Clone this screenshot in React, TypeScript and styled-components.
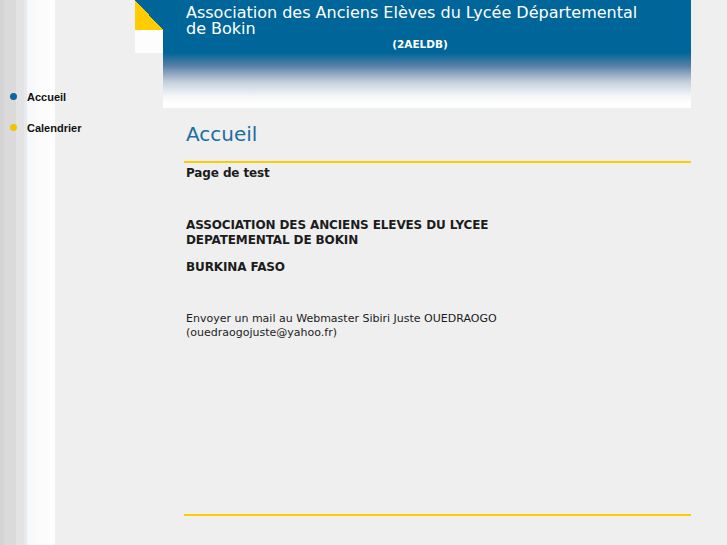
import type { FC } from 'react';
import styled, { createGlobalStyle } from 'styled-components';

const GlobalStyle = createGlobalStyle`
  html, body {
    margin: 0;
    padding: 0;
  }

  body {
    background-color: #efefef;
    background-image: linear-gradient(
      to right,
      #d3d3d3 0,
      #d3d3d3 4px,
      #dadada 4px,
      #dadada 16px,
      #e3e3e3 16px,
      #e3e3e3 24px,
      #e7eaed 24px,
      #e7eaed 27px,
      #f6f7f9 27px,
      #fcfcfd 40px,
      #fdfdfd 55px,
      #efefef 55px
    );
    background-repeat: repeat-y;
    font-family: 'DejaVu Sans', Verdana, sans-serif;
    min-height: 545px;
  }
`;

type NavItem = {
  readonly label: string;
  readonly dot: string;
};

const navItems: readonly NavItem[] = [
  { label: 'Accueil', dot: '#0d64a0' },
  { label: 'Calendrier', dot: '#f2c400' },
];

const App: FC = () => (
  <>
    <GlobalStyle />
    <Page>
      <Sidebar>
        {navItems.map((item) => (
          <NavLink key={item.label} $dot={item.dot}>
            {item.label}
          </NavLink>
        ))}
      </Sidebar>
      <Main>
        <Header>
          <Corner>
            <Triangle />
            <CornerWhite />
          </Corner>
          <Banner>
            <SiteTitle>
              Association des Anciens Elèves du Lycée Départemental de Bokin
            </SiteTitle>
            <SiteTag>(2AELDB)</SiteTag>
          </Banner>
        </Header>
        <Content>
          <Heading>Accueil</Heading>
          <Article>
            <Strong>Page de test</Strong>
            <Strong $top={37}>
              ASSOCIATION DES ANCIENS ELEVES DU LYCEE
              <br />
              DEPATEMENTAL DE BOKIN
            </Strong>
            <Strong $top={12}>BURKINA FASO</Strong>
            <Text>
              Envoyer un mail au Webmaster Sibiri Juste OUEDRAOGO
              <br />
              (ouedraogojuste@yahoo.fr)
            </Text>
          </Article>
        </Content>
      </Main>
    </Page>
  </>
);

export default App;

const Page = styled.div`
  display: flex;
  align-items: flex-start;
`;

const Sidebar = styled.nav`
  width: 135px;
  flex-shrink: 0;
  display: flex;
  flex-direction: column;
  gap: 17px;
  padding-top: 90px;
`;

const NavLink = styled.a<{ readonly $dot: string }>`
  position: relative;
  display: block;
  padding-left: 27px;
  font-family: 'Liberation Sans', Arial, sans-serif;
  font-size: 11px;
  font-weight: bold;
  line-height: 14px;
  color: #111;
  cursor: pointer;

  &::before {
    content: '';
    position: absolute;
    left: 10px;
    top: 3px;
    width: 7px;
    height: 7px;
    border-radius: 50%;
    background: ${({ $dot }) => $dot};
  }
`;

const Main = styled.div`
  width: 556px;
  flex-shrink: 0;
`;

const Header = styled.header`
  display: flex;
  align-items: flex-start;
`;

const Corner = styled.div`
  width: 28px;
  flex-shrink: 0;
  display: flex;
  flex-direction: column;
`;

const Triangle = styled.div`
  height: 30px;
  background: linear-gradient(
    to top right,
    #ffcc00 0,
    #ffcc00 50%,
    #006699 50%,
    #006699 100%
  );
`;

const CornerWhite = styled.div`
  height: 23px;
  background: #fdfdfd;
`;

const Banner = styled.div`
  flex: 1;
  height: 108px;
  box-sizing: border-box;
  padding: 5px 37px 0 23px;
  background: linear-gradient(
    to bottom,
    #006699 0,
    #006699 53px,
    #5a80a6 66px,
    #c5d0de 82px,
    #f4f6f8 96px,
    #ffffff 104px
  );
  color: #fff;
`;

const SiteTitle = styled.h1`
  margin: 0;
  font-size: 16px;
  font-weight: normal;
  line-height: 16px;
`;

const SiteTag = styled.div`
  margin-top: 2px;
  text-align: center;
  font-size: 10.5px;
  font-weight: bold;
  line-height: 11px;
`;

const Content = styled.main`
  margin-left: 49px;
  width: 507px;
`;

const Heading = styled.h2`
  margin: 14px 0 0;
  padding: 0 0 15px 2px;
  border-bottom: 2px solid #ffcc00;
  font-size: 20px;
  font-weight: normal;
  line-height: 24px;
  color: #1a6ea0;
`;

const Article = styled.article`
  box-sizing: border-box;
  min-height: 353px;
  padding: 3px 0 0 2px;
  border-bottom: 2px solid #ffcc00;
  font-size: 12px;
  color: #1c1c1c;
`;

const Strong = styled.p<{ readonly $top?: number }>`
  margin: ${({ $top = 0 }) => $top}px 0 0;
  font-weight: bold;
  line-height: 15px;
  letter-spacing: -0.12px;
`;

const Text = styled.p`
  margin: 37px 0 0;
  font-size: 11px;
  line-height: 14px;
`;
